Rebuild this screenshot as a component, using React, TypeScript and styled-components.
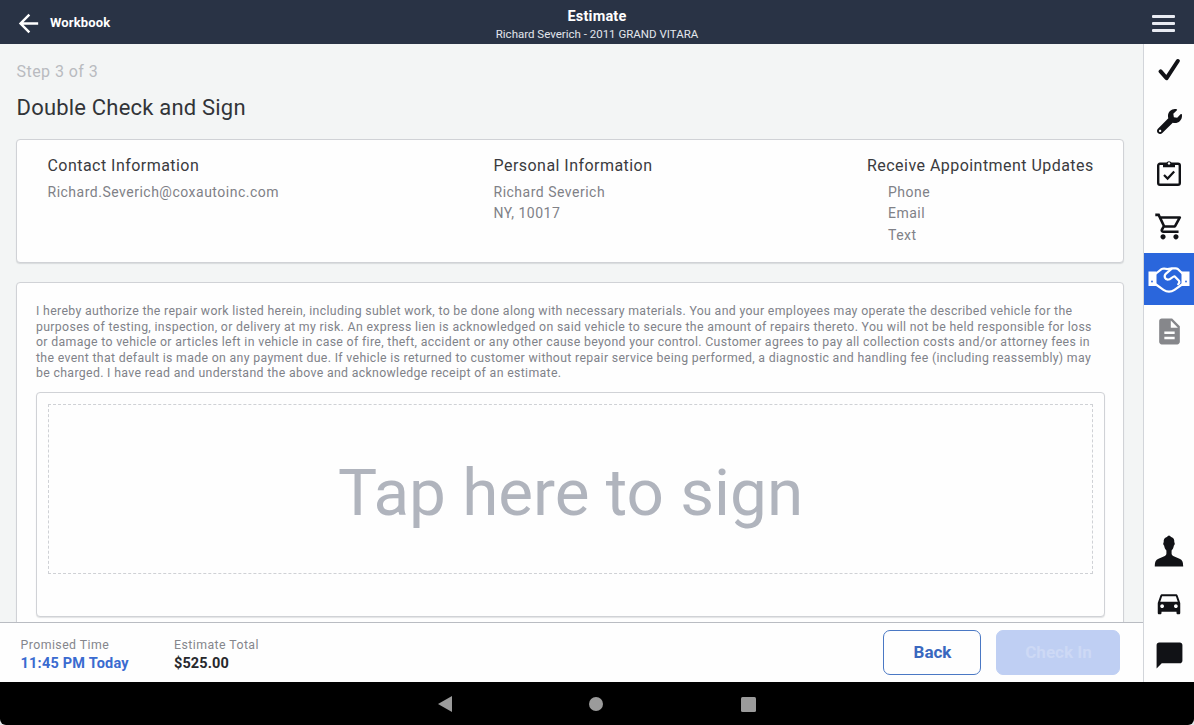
import React from "react";
import styled, { createGlobalStyle } from "styled-components";
import { FaWrench } from "react-icons/fa";
import {
  MdArrowBack,
  MdChatBubble,
  MdDescription,
  MdDirectionsCar,
  MdOutlineShoppingCart,
} from "react-icons/md";

const GlobalStyle = createGlobalStyle`
  * { box-sizing: border-box; }
  body {
    margin: 0;
    background: #e4e6e8;
    font-family: Roboto, "Liberation Sans", sans-serif;
    overflow: hidden;
  }
`;

const Screen = styled.div`
  width: 1194px;
  height: 725px;
  display: flex;
  flex-direction: column;
  overflow: hidden;
  border-radius: 0 0 6px 6px;
  background: #000;
`;

const TopBar = styled.header`
  height: 43.5px;
  flex: none;
  display: grid;
  grid-template-columns: 1fr auto 1fr;
  background: #293345;
  color: #fff;
`;

const BackLink = styled.div`
  display: flex;
  align-items: center;
  padding: 3px 0 0 14px;
  gap: 7px;
  svg { display: block; }
`;

const TitleBlock = styled.div`
  display: flex;
  flex-direction: column;
  align-items: center;
  padding-top: 8px;
`;

const MenuButton = styled.div`
  display: flex;
  flex-direction: column;
  align-items: flex-end;
  gap: 4px;
  padding: 15px 19px 0 0;
`;

const MenuLine = styled.span`
  width: 23px;
  height: 3px;
  background: #e8ebf2;
  border-radius: 1px;
`;

const Text = styled.span<{
  $size: number;
  $line: number;
  $color?: string;
  $weight?: number;
  $spacing?: number;
}>`
  display: block;
  white-space: nowrap;
  font-size: ${(p) => p.$size}px;
  line-height: ${(p) => p.$line}px;
  color: ${(p) => p.$color ?? "inherit"};
  font-weight: ${(p) => p.$weight ?? 400};
  letter-spacing: ${(p) => p.$spacing ?? 0}px;
`;

const Body = styled.div`
  height: 638.5px;
  flex: none;
  display: flex;
`;

const Main = styled.main`
  width: 1143px;
  display: flex;
  flex-direction: column;
  background: #f3f5f5;
`;

const Content = styled.div`
  flex: 1;
  min-height: 0;
  overflow: hidden;
  padding: 17.5px 19px 0 16px;
`;

const PageHeading = styled.div`
  height: 78px;
  padding: 1px 0 0 0.5px;
  display: flex;
  flex-direction: column;
  gap: 12px;
`;

const Card = styled.section`
  background: #fefefe;
  border: 1px solid #d0d2d6;
  border-radius: 4px;
  box-shadow: 0 1px 1px rgba(60, 64, 72, 0.14);
`;

const InfoCard = styled(Card)`
  height: 124px;
  padding: 16px 0 0 30.5px;
  display: grid;
  grid-template-columns: 446px 373.5px auto;
`;

const InfoLines = styled.div<{ $indent?: number }>`
  padding: 5.7px 0 0 ${(p) => p.$indent ?? 0}px;
`;

const AgreementCard = styled(Card)`
  margin-top: 19px;
  height: 400px;
  padding: 21px 18px 0 19px;
`;

const SignatureBox = styled(Card)`
  margin-top: 10.5px;
  height: 225px;
  padding: 11px 11px 0;
`;

const SignatureArea = styled.div`
  height: 170px;
  border: 1px dashed #cfd1d5;
  display: flex;
  justify-content: center;
  padding-top: 50px;
`;

const Footer = styled.footer`
  height: 60px;
  flex: none;
  display: flex;
  align-items: flex-start;
  background: #fefefe;
  border-top: 1px solid #b9bcc2;
  padding-left: 20.5px;
`;

const Summary = styled.div<{ $width: number }>`
  width: ${(p) => p.$width}px;
  padding-top: 13.5px;
`;

const Actions = styled.div`
  margin-left: auto;
  display: flex;
  gap: 15px;
  padding: 7px 23px 0 0;
`;

const Button = styled.button<{ $primary?: boolean }>`
  width: ${(p) => (p.$primary ? 124 : 98)}px;
  height: 45px;
  padding: 0 0 1px 1px;
  display: flex;
  align-items: center;
  justify-content: center;
  font-family: inherit;
  border-radius: 7px;
  border: 1px solid ${(p) => (p.$primary ? "#bfcff3" : "#4a78c4")};
  background: ${(p) => (p.$primary ? "#bfcff3" : "#fefefe")};
`;

const Sidebar = styled.nav`
  width: 51px;
  display: flex;
  flex-direction: column;
  background: #fefefe;
  border-left: 1px solid #d2d5da;
`;

const SideItem = styled.div<{ $active?: boolean; $color?: string; $lift?: number }>`
  height: 52.3px;
  flex: none;
  display: flex;
  align-items: center;
  justify-content: center;
  padding-bottom: ${(p) => p.$lift ?? 0}px;
  color: ${(p) => p.$color ?? "#111216"};
  background: ${(p) => (p.$active ? "#2a66dc" : "transparent")};
  svg { display: block; flex: none; }
`;

const Spacer = styled.div`
  flex: 1;
`;

const AndroidBar = styled.div`
  flex: 1;
  display: flex;
  justify-content: center;
  align-items: center;
  gap: 137.5px;
  padding: 1px 0.5px 0 0;
  svg { display: block; }
`;

const CheckIcon = () => (
  <svg width="22" height="24" viewBox="0 0 22 24" fill="none" stroke="currentColor" strokeWidth="4" strokeLinecap="round" strokeLinejoin="round">
    <path d="M2.600 13.400 8.600 20.200 19.800 3" />
  </svg>
);

const ClipboardCheckIcon = () => (
  <svg width="26" height="28" viewBox="0 0 26 28" fill="none" stroke="currentColor">
    <rect x="2.200" y="4.700" width="21.600" height="21" rx="1.800" strokeWidth="2.400" />
    <path d="M7 4h3.400a2.800 2.800 0 0 1 5.200 0H19v4.200H7Z" fill="currentColor" stroke="none" />
    <circle cx="13" cy="4.400" r="1.200" fill="#fefefe" stroke="none" />
    <path d="m8 16 3.600 3.600 6.600-7" strokeWidth="2.200" />
  </svg>
);

const HandshakeIcon = () => (
  <svg width="42" height="28" viewBox="0 0 42 28" fill="none" stroke="#fff" strokeLinejoin="round" strokeLinecap="round">
    <path d="M.5 6.500h8v14.500h-8zM33.500 6.500h8v14.500h-8z" fill="#fff" stroke="none" />
    <circle cx="4" cy="16.500" r="0.900" fill="#2a66dc" stroke="none" />
    <circle cx="38" cy="16.500" r="0.900" fill="#2a66dc" stroke="none" />
    <path
      d="M8 8.500 13.500 4.200Q14.500 3.500 16 3.500L19.500 4.200 24 3.400H27.500Q29 3.400 30 4.200L34.500 8.500M8 19.500 15.500 24.800Q21 28.600 26.500 24.800L34 19.500"
      strokeWidth="2.200"
    />
    <path d="M23.500 4 18 8.600C15.400 11.300 17 15 20.500 14.500 22.500 14.200 24 12 26.500 11.300L31 15.800Q32 17.500 30.200 19.200" strokeWidth="2.200" />
  </svg>
);

const PersonIcon = () => (
  <svg width="30" height="32" viewBox="0 0 30 32" fill="currentColor">
    <path d="M15 .5c1 .2 1.500 1 2.200 1.500 2.300.7 3.300 2.500 3.100 5.200.8.700.5 2.600-.4 3.400-.3 2.200-1.200 3.900-2.300 5v3.200c0 1.200 1 2 2.700 2.700l5.200 2.300c2.700 1.200 3.700 3.200 3.700 7.700H.8c0-4.500 1-6.500 3.700-7.700l5.200-2.300c1.700-.7 2.700-1.500 2.700-2.700v-3.200c-1.100-1.100-2-2.800-2.300-5-.9-.8-1.200-2.700-.4-3.400-.2-2.700.8-4.500 3.100-5.200C13.500 1.500 14 .7 15 .5Z" />
  </svg>
);

const agreement = [
  "I hereby authorize the repair work listed herein, including sublet work, to be done along with necessary materials. You and your employees may operate the described vehicle for the",
  "purposes of testing, inspection, or delivery at my risk. An express lien is acknowledged on said vehicle to secure the amount of repairs thereto. You will not be held responsible for loss",
  "or damage to vehicle or articles left in vehicle in case of fire, theft, accident or any other cause beyond your control. Customer agrees to pay all collection costs and/or attorney fees in",
  "the event that default is made on any payment due. If vehicle is returned to customer without repair service being performed, a diagnostic and handling fee (including reassembly) may",
  "be charged. I have read and understand the above and acknowledge receipt of an estimate.",
];

const Heading = ({ children }: { children: React.ReactNode }) => (
  <Text $size={16} $line={20} $color="#3a3b40" $spacing={0.46}>{children}</Text>
);

const Detail = ({ children }: { children: React.ReactNode }) => (
  <Text $size={14} $line={21.5} $color="#808187" $spacing={0.5}>{children}</Text>
);

export default function App() {
  return (
    <>
      <GlobalStyle />
      <Screen>
        <TopBar>
          <BackLink>
            <MdArrowBack size={29} />
            <Text $size={13} $line={16} $weight={700} $spacing={0.15}>Workbook</Text>
          </BackLink>
          <TitleBlock>
            <Text $size={14.5} $line={17} $weight={700} $spacing={0.2}>Estimate</Text>
            <Text $size={11.5} $line={18} $color="#e3e6ec">Richard Severich - 2011 GRAND VITARA</Text>
          </TitleBlock>
          <MenuButton>
            <MenuLine />
            <MenuLine />
            <MenuLine />
          </MenuButton>
        </TopBar>
        <Body>
          <Main>
            <Content>
              <PageHeading>
                <Text $size={16} $line={20} $color="#b9bbc0" $spacing={0.45}>Step 3 of 3</Text>
                <Text $size={22} $line={28} $color="#323438" $spacing={0.2}>Double Check and Sign</Text>
              </PageHeading>
              <InfoCard>
                <div>
                  <Heading>Contact Information</Heading>
                  <InfoLines><Detail>Richard.Severich@coxautoinc.com</Detail></InfoLines>
                </div>
                <div>
                  <Heading>Personal Information</Heading>
                  <InfoLines>
                    <Detail>Richard Severich</Detail>
                    <Detail>NY, 10017</Detail>
                  </InfoLines>
                </div>
                <div>
                  <Heading>Receive Appointment Updates</Heading>
                  <InfoLines $indent={21}>
                    <Detail>Phone</Detail>
                    <Detail>Email</Detail>
                    <Detail>Text</Detail>
                  </InfoLines>
                </div>
              </InfoCard>
              <AgreementCard>
                {agreement.map((line) => (
                  <Text key={line} $size={12.3} $line={15.5} $color="#808289" $spacing={0.337}>{line}</Text>
                ))}
                <SignatureBox>
                  <SignatureArea>
                    <Text $size={65.6} $line={76} $color="#b0b4bd">Tap here to sign</Text>
                  </SignatureArea>
                </SignatureBox>
              </AgreementCard>
            </Content>
            <Footer>
              <Summary $width={153.5}>
                <Text $size={12.3} $line={17} $color="#85868c" $spacing={0.45}>Promised Time</Text>
                <Text $size={14.5} $line={19} $color="#3a6bd0" $weight={700} $spacing={0.22}>11:45 PM Today</Text>
              </Summary>
              <Summary $width={120}>
                <Text $size={12.3} $line={17} $color="#85868c" $spacing={0.45}>Estimate Total</Text>
                <Text $size={14.5} $line={19} $color="#27282c" $weight={700} $spacing={0.1}>$525.00</Text>
              </Summary>
              <Actions>
                <Button><Text $size={17} $line={20} $color="#3a68bf" $weight={700}>Back</Text></Button>
                <Button $primary><Text $size={17} $line={20} $color="#cdd9f5" $weight={700}>Check In</Text></Button>
              </Actions>
            </Footer>
          </Main>
          <Sidebar>
            <SideItem><CheckIcon /></SideItem>
            <SideItem><FaWrench size={25} /></SideItem>
            <SideItem $lift={2}><ClipboardCheckIcon /></SideItem>
            <SideItem><MdOutlineShoppingCart size={31} /></SideItem>
            <SideItem $active><HandshakeIcon /></SideItem>
            <SideItem $color="#86878b"><MdDescription size={31} /></SideItem>
            <Spacer />
            <SideItem><PersonIcon /></SideItem>
            <SideItem $lift={2}><MdDirectionsCar size={30} /></SideItem>
            <SideItem><MdChatBubble size={31} /></SideItem>
          </Sidebar>
        </Body>
        <AndroidBar>
          <svg width="14" height="16" viewBox="0 0 14 16"><path d="M0 8 14 0v16Z" fill="#9b9b9b" /></svg>
          <svg width="14" height="14" viewBox="0 0 14 14"><circle cx="7" cy="7" r="7" fill="#9b9b9b" /></svg>
          <svg width="15" height="15" viewBox="0 0 15 15"><rect width="15" height="15" rx="1.500" fill="#9b9b9b" /></svg>
        </AndroidBar>
      </Screen>
    </>
  );
}
